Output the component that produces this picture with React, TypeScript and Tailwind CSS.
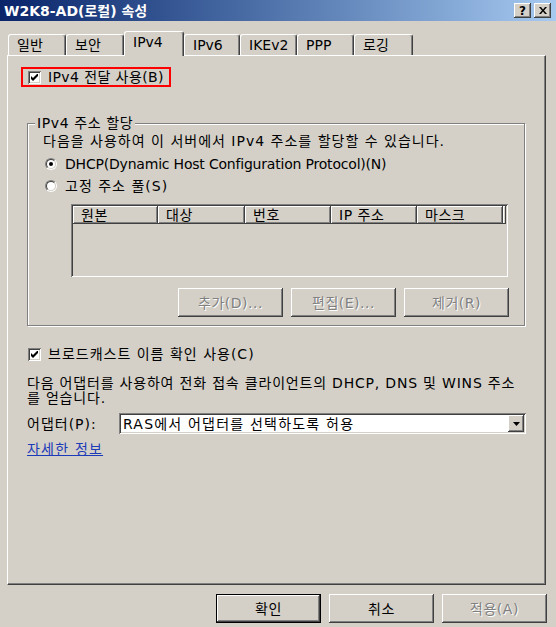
import React from "react";

const raised =
  "shadow-[inset_-1px_-1px_#404040,inset_1px_1px_#ffffff,inset_-2px_-2px_#808080,inset_2px_2px_#d4d0c8]";
const sunken =
  "shadow-[inset_1px_1px_#808080,inset_-1px_-1px_#ffffff,inset_2px_2px_#404040,inset_-2px_-2px_#d4d0c8]";

const tabs = [
  { label: "일반", w: "w-[58px]" },
  { label: "보안", w: "w-[58px]" },
  { label: "IPv4", w: "w-[60px]", active: true },
  { label: "IPv6", w: "w-[56px]" },
  { label: "IKEv2", w: "w-[57px]" },
  { label: "PPP", w: "w-[57px]" },
  { label: "로깅", w: "w-[59px]" },
];

const columns = [
  { label: "원본", w: "w-[85px]" },
  { label: "대상", w: "w-[87px]" },
  { label: "번호", w: "w-[86px]" },
  { label: "IP 주소", w: "w-[86px]" },
  { label: "마스크", w: "w-[86px]" },
];

function Check() {
  return (
    <span className={`w-[13px] h-[13px] shrink-0 bg-white flex items-center justify-center ${sunken}`}>
      <svg width="7" height="7" viewBox="0 0 7 7">
        <polygon points="0,2 2,4 7,-1 7,2 2,7 0,5" fill="#000" />
      </svg>
    </span>
  );
}

function Radio({ on }: { on?: boolean }) {
  return (
    <span className="w-[12px] h-[12px] shrink-0 rounded-full border border-t-[#808080] border-l-[#808080] border-r-white border-b-white flex">
      <span className="flex-1 rounded-full border border-t-[#404040] border-l-[#404040] border-r-[#d4d0c8] border-b-[#d4d0c8] bg-white flex items-center justify-center">
        {on && <span className="w-[4px] h-[4px] rounded-full bg-black" />}
      </span>
    </span>
  );
}

function Btn({ label, disabled, def }: { label: string; disabled?: boolean; def?: boolean }) {
  return (
    <div
      className={[
        "w-[105px] h-[29px] flex items-center justify-center bg-[#d4d0c8] tracking-[0.5px]",
        def ? "border border-black" : "",
        raised,
        disabled ? "text-[#808080] [text-shadow:1px_1px_#ffffff]" : "text-black",
      ].join(" ")}
    >
      {label}
    </div>
  );
}

export default function App() {
  return (
    <div className="w-[556px] h-[627px] bg-[#d4d0c8] flex flex-col overflow-hidden text-[14px] leading-[16px] text-black font-['DejaVu_Sans','Noto_Sans_CJK_KR',sans-serif]">
      {/* Title bar */}
      <div className="h-[21px] shrink-0 flex items-center justify-between pl-[4px] pr-[5px] bg-linear-to-r from-[#0a246a] to-[#a6caf0]">
        <span className="text-white font-bold text-[14px]">W2K8-AD(로컬) 속성</span>
        <div className="flex gap-[3px]">
          <div className={`w-[17px] h-[15px] bg-[#d4d0c8] flex items-center justify-center text-[12px] font-bold leading-none ${raised}`}>
            ?
          </div>
          <div className={`w-[17px] h-[15px] bg-[#d4d0c8] flex items-center justify-center ${raised}`}>
            <svg width="8" height="7" viewBox="0 0 8 7">
              <path d="M0 0h2l2 2.5L6 0h2L5 3.5 8 7H6L4 4.5 2 7H0l3-3.5z" fill="#000" />
            </svg>
          </div>
        </div>
      </div>

      {/* Tabs */}
      <div className="h-[34px] shrink-0 flex items-end pl-[8px]">
        {tabs.map((t) => (
          <div
            key={t.label}
            className={[
              t.w,
              "flex items-center pl-[8px] bg-[#d4d0c8] border-t border-l border-r border-white border-r-[#404040] rounded-t-[3px] shadow-[inset_-1px_0_#808080]",
              t.active ? "h-[25px] -mb-px relative z-10 pb-[4px]" : "h-[21px]",
            ].join(" ")}
          >
            {t.label}
          </div>
        ))}
      </div>

      {/* Panel */}
      <div className="ml-[7px] w-[539px] h-[530px] shrink-0 border-t border-l border-white border-r border-b border-r-[#404040] border-b-[#404040] shadow-[inset_-1px_-1px_#808080] flex flex-col pl-[19px] tracking-[1px]">
        <div className="mt-[11px] -ml-[6px] w-[150px] h-[20px] border-2 border-[#ff0000] flex items-center pl-[5px] gap-[7px] tracking-[0.4px]">
          <Check />
          <span>IPv4 전달 사용(B)</span>
        </div>

        <fieldset className="mt-[29px] w-[498px] border border-[#808080] shadow-[1px_1px_0_#ffffff,inset_1px_1px_0_#ffffff]">
          <legend className="ml-[7px] px-[2px] leading-[15px] bg-[#d4d0c8] tracking-[0.6px]">IPv4 주소 할당</legend>
          <div className="flex flex-col pl-[15px] pb-[8px]">
            <div className="mt-[2px]">다음을 사용하여 이 서버에서 IPv4 주소를 할당할 수 있습니다.</div>
            <div className="mt-[7px] flex items-center gap-[8px] pl-[2px]">
              <Radio on />
              <span className="tracking-[-0.2px]">DHCP(Dynamic Host Configuration Protocol)(N)</span>
            </div>
            <div className="mt-[6px] flex items-center gap-[8px] pl-[2px]">
              <Radio />
              <span>고정 주소 풀(S)</span>
            </div>
            <div className={`mt-[10px] ml-[28px] w-[437px] h-[73px] p-[2px] tracking-[0.5px] ${sunken}`}>
              <div className="flex h-[18px]">
                {columns.map((c) => (
                  <div
                    key={c.label}
                    className={`${c.w} flex items-center pl-[8px] shadow-[inset_-1px_-1px_#404040,inset_1px_1px_#ffffff,inset_-2px_-2px_#808080]`}
                  >
                    {c.label}
                  </div>
                ))}
                <div className="flex-1 shadow-[inset_-1px_-1px_#404040,inset_1px_1px_#ffffff]" />
              </div>
            </div>
            <div className="mt-[11px] ml-[135px] flex gap-[8px]">
              <Btn label="추가(D)..." disabled />
              <Btn label="편집(E)..." disabled />
              <Btn label="제거(R)" disabled />
            </div>
          </div>
        </fieldset>

        <div className="mt-[20px] ml-[1px] flex items-center gap-[7px]">
          <Check />
          <span>브로드캐스트 이름 확인 사용(C)</span>
        </div>

        <p className="mt-[14px] leading-[15px] tracking-[0.8px]">
          다음 어댑터를 사용하여 전화 접속 클라이언트의 DHCP, DNS 및 WINS 주소
          <br />를 얻습니다.
        </p>

        <div className="mt-[7px] flex items-center">
          <span className="w-[92px]">어댑터(P):</span>
          <div className={`w-[407px] h-[21px] p-[2px] bg-white flex items-center ${sunken}`}>
            <span className="flex-1 pl-[2px] tracking-[1.2px]">RAS에서 어댑터를 선택하도록 허용</span>
            <div className={`w-[16px] h-[17px] bg-[#d4d0c8] flex items-center justify-center ${raised}`}>
              <svg width="7" height="4" viewBox="0 0 7 4">
                <polygon points="0,0 7,0 3.5,4" fill="#000" />
              </svg>
            </div>
          </div>
        </div>

        <a className="mt-[8px] leading-[15px] text-[#1c3bb8] underline self-start tracking-[1.2px]">자세한 정보</a>
      </div>

      {/* Dialog buttons */}
      <div className="mt-[9px] flex justify-end gap-[8px] pr-[9px]">
        <Btn label="확인" def />
        <Btn label="취소" />
        <Btn label="적용(A)" disabled />
      </div>
    </div>
  );
}
